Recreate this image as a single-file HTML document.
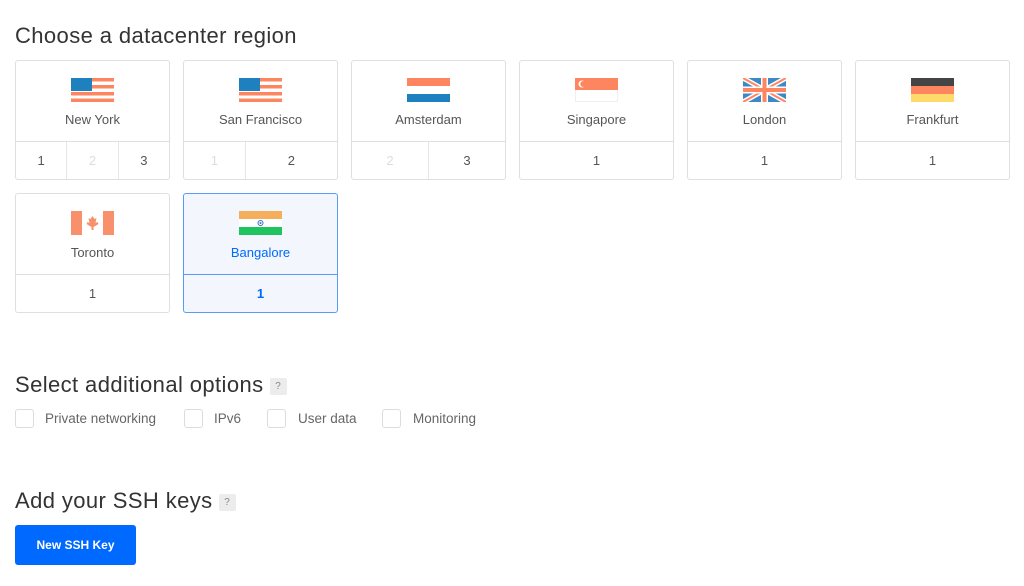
<!DOCTYPE html>
<html><head><meta charset="utf-8"><style>
*{box-sizing:border-box;margin:0;padding:0}
body{width:1024px;height:586px;background:#fff;font-family:"Liberation Sans",sans-serif;color:#444;position:relative;overflow:hidden}
h2{position:absolute;left:15px;font-weight:normal;font-size:22px;color:#333;letter-spacing:0.4px;white-space:nowrap}
.card{position:absolute;width:155px;height:120px;border:1px solid #dfdfdf;border-radius:3px;background:#fff}
.card .flag{position:absolute;left:55px;top:17px;width:43px;height:24px}
.card .nm{position:absolute;top:51px;width:100%;text-align:center;font-size:13px;color:#555}
.card .nums{position:absolute;top:80px;left:0;right:0;bottom:0;border-top:1px solid #dfdfdf;display:flex}
.card .nums div{flex:1;text-align:center;line-height:37px;font-size:13px;color:#555;border-left:1px solid #e6e6e6}
.card .nums div:first-child{border-left:none}
.card .nums .d{color:#ddd}
.card.sel{background:#f3f7fd;border-color:#5a9bf8}
.card.sel .nm{color:#0069ff}
.card.sel .nums{border-top-color:#5a9bf8}
.card.sel .nums div{color:#0069ff;font-weight:bold}
.q{display:inline-block;width:17px;height:17px;background:#ececec;border-radius:2px;font-size:10px;color:#888;text-align:center;line-height:17px;vertical-align:3px;margin-left:6px;letter-spacing:0}
.cb{position:absolute;top:409px;width:19px;height:19px;border:1px solid #dcdcdc;border-radius:3px}
.lb{position:absolute;top:411px;font-size:13.5px;color:#666}
.btn{position:absolute;left:15px;top:525px;width:121px;height:40px;background:#0069ff;border-radius:3px;color:#fff;font-size:12px;font-weight:bold;text-align:center;line-height:40px}
</style></head><body>
<h2 style="top:23px">Choose a datacenter region</h2>

<div class="card" style="left:15px;top:60px">
<svg class="flag" viewBox="0 0 43 24"><rect y="0" width="43" height="3.5" fill="#fd8660"/><rect y="7" width="43" height="3.5" fill="#fd8660"/><rect y="14" width="43" height="3.5" fill="#fd8660"/><rect y="20.5" width="43" height="3.5" fill="#fd8660"/><rect width="21" height="13" fill="#1f80c0"/></svg>
<div class="nm">New York</div><div class="nums"><div>1</div><div class="d">2</div><div>3</div></div></div>

<div class="card" style="left:183px;top:60px">
<svg class="flag" viewBox="0 0 43 24"><rect y="0" width="43" height="3.5" fill="#fd8660"/><rect y="7" width="43" height="3.5" fill="#fd8660"/><rect y="14" width="43" height="3.5" fill="#fd8660"/><rect y="20.5" width="43" height="3.5" fill="#fd8660"/><rect width="21" height="13" fill="#1f80c0"/></svg>
<div class="nm">San Francisco</div><div class="nums"><div class="d">1</div><div style="flex:1.5">2</div></div></div>

<div class="card" style="left:351px;top:60px">
<svg class="flag" viewBox="0 0 43 24"><rect width="43" height="8" fill="#fd8660"/><rect y="16" width="43" height="8" fill="#1f80c0"/></svg>
<div class="nm">Amsterdam</div><div class="nums"><div class="d">2</div><div>3</div></div></div>

<div class="card" style="left:519px;top:60px">
<svg class="flag" viewBox="0 0 43 24"><rect x="0.5" y="0.5" width="42" height="23" fill="#fff" stroke="#eee"/><rect width="43" height="12" fill="#fd8660"/><circle cx="7" cy="6" r="3.5" fill="#fff"/><circle cx="8.3" cy="6" r="3" fill="#fd8660"/></svg>
<div class="nm">Singapore</div><div class="nums"><div>1</div></div></div>

<div class="card" style="left:687px;top:60px">
<svg class="flag" viewBox="0 0 43 24"><rect width="43" height="24" fill="#3f88c5"/><path d="M0 0L43 24M43 0L0 24" stroke="#fff" stroke-width="5"/><path d="M0 0L43 24M43 0L0 24" stroke="#fd8660" stroke-width="2"/><path d="M21.5 0V24M0 12H43" stroke="#fff" stroke-width="7"/><path d="M21.5 0V24M0 12H43" stroke="#fd8660" stroke-width="4"/></svg>
<div class="nm">London</div><div class="nums"><div>1</div></div></div>

<div class="card" style="left:855px;top:60px">
<svg class="flag" viewBox="0 0 43 24"><rect width="43" height="8" fill="#444"/><rect y="8" width="43" height="8" fill="#fd8660"/><rect y="16" width="43" height="8" fill="#fddb6b"/></svg>
<div class="nm">Frankfurt</div><div class="nums"><div>1</div></div></div>

<div class="card" style="left:15px;top:193px">
<svg class="flag" viewBox="0 0 43 24"><rect width="11" height="24" fill="#f7906b"/><rect x="32" width="11" height="24" fill="#f7906b"/><path d="M21.5 5l2 3 2-1-1 5 2-1 1 2-5 3v3h-2v-3l-5-3 1-2 2 1-1-5 2 1z" fill="#f7906b"/></svg>
<div class="nm">Toronto</div><div class="nums"><div>1</div></div></div>

<div class="card sel" style="left:183px;top:193px">
<svg class="flag" viewBox="0 0 43 24"><rect width="43" height="8" fill="#f5ae5c"/><rect y="8" width="43" height="8" fill="#fff"/><rect y="16" width="43" height="8" fill="#1fc45f"/><circle cx="21.5" cy="12" r="2.5" fill="none" stroke="#3a6fc4" stroke-width="1"/><circle cx="21.5" cy="12" r="1" fill="#3a6fc4"/></svg>
<div class="nm">Bangalore</div><div class="nums"><div>1</div></div></div>

<h2 style="top:372px">Select additional options<span class="q">?</span></h2>
<div class="cb" style="left:15px"></div><div class="lb" style="left:45px">Private networking</div>
<div class="cb" style="left:184px"></div><div class="lb" style="left:214px">IPv6</div>
<div class="cb" style="left:267px"></div><div class="lb" style="left:298px">User data</div>
<div class="cb" style="left:382px"></div><div class="lb" style="left:413px">Monitoring</div>

<h2 style="top:488px">Add your SSH keys<span class="q">?</span></h2>
<div class="btn">New SSH Key</div>
</body></html>
